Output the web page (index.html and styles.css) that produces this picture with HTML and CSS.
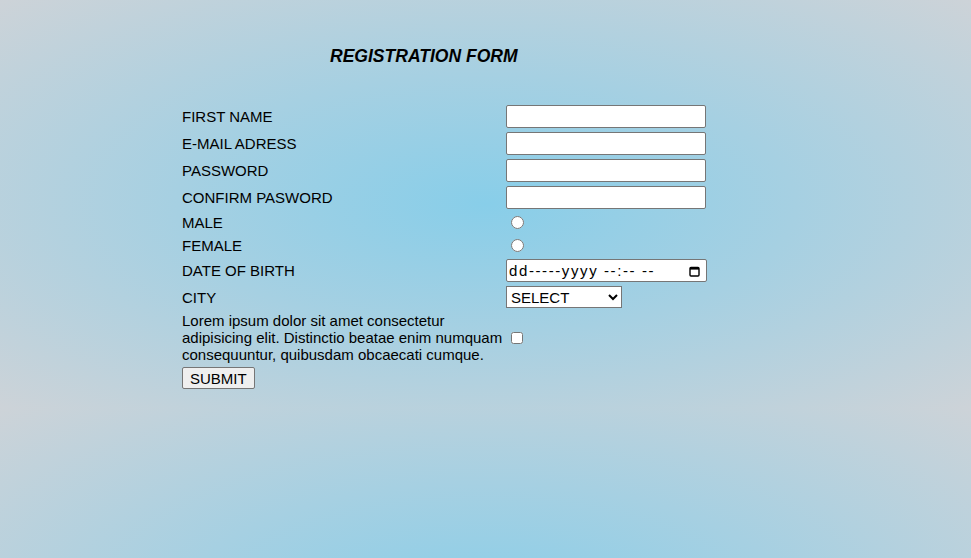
FILE: index.html
```html
<!DOCTYPE html>
<html lang="en">
<head>
<meta charset="utf-8">
<title>Registration Form</title>
<link rel="stylesheet" href="styles.css">
</head>
<body>
<div class="page">
  <h3 class="title">REGISTRATION FORM</h3>
  <form class="form">
    <table class="reg">
      <tr><td class="lbl">FIRST NAME</td><td class="ctl"><input class="field" type="text"></td></tr>
      <tr><td class="lbl">E-MAIL ADRESS</td><td class="ctl"><input class="field" type="text"></td></tr>
      <tr><td class="lbl">PASSWORD</td><td class="ctl"><input class="field" type="password"></td></tr>
      <tr><td class="lbl">CONFIRM PASWORD</td><td class="ctl"><input class="field" type="password"></td></tr>
      <tr><td class="lbl">MALE</td><td class="ctl"><input class="radio" type="radio" name="gender"></td></tr>
      <tr><td class="lbl">FEMALE</td><td class="ctl"><input class="radio" type="radio" name="gender"></td></tr>
      <tr><td class="lbl">DATE OF BIRTH</td><td class="ctl">
        <div class="date"><span class="date-text">dd-----yyyy --:-- --</span>
          <svg class="cal" width="11" height="12" viewBox="0 0 11 12"><rect x="1" y="2.5" width="9" height="8.5" rx="1" fill="none" stroke="#000" stroke-width="1.4"/><rect x="1" y="2" width="9" height="2.6" fill="#000"/></svg>
        </div>
      </td></tr>
      <tr><td class="lbl">CITY</td><td class="ctl"><select class="city"><option>SELECT</option><option>DELHI</option><option>MUMBAI</option></select></td></tr>
      <tr><td class="lbl">Lorem ipsum dolor sit amet consectetur adipisicing elit. Distinctio beatae enim numquam consequuntur, quibusdam obcaecati cumque.</td><td class="ctl"><input class="check" type="checkbox"></td></tr>
      <tr><td class="lbl"><button class="submit" type="button">SUBMIT</button></td><td></td></tr>
    </table>
  </form>
</div>
</body>
</html>
```
FILE: styles.css
```css
html {
  min-height: 100%;
  background: radial-gradient(ellipse farthest-corner at 50% 50%, #88cee9 0%, #a6d0e2 45%, #cdd3d8 100%);
  background-size: 100% 408px;
  background-repeat: repeat;
}
body {
  margin: 0;
  font-family: "Liberation Sans", Arial, sans-serif;
  font-size: 15px;
  color: #000;
}
.page {
  padding: 46px 0 0 179px;
}
.title {
  margin: 0 0 35px 151px;
  font-size: 17.55px;
  font-weight: bold;
  font-style: italic;
  line-height: 21px;
}
.form { margin: 0; }
.reg {
  border-collapse: separate;
  border-spacing: 2px;
}
.reg td {
  padding: 1px;
  vertical-align: middle;
}
.reg td.ctl {
  padding: 1px 1px 1px 0;
}
.lbl {
  width: 321px;
  line-height: 17px;
}
.field {
  box-sizing: border-box;
  display: block;
  width: 200px;
  height: 23px;
  margin: 0;
  border: 1px solid #767676;
  border-radius: 2px;
  background: #fff;
  padding: 1px 2px;
}
.radio {
  margin: 3px 3px 0 5px;
  width: 13px;
  height: 13px;
}
.date {
  box-sizing: border-box;
  display: flex;
  align-items: center;
  justify-content: space-between;
  width: 201px;
  height: 23px;
  border: 1px solid #767676;
  border-radius: 2px;
  background: #fff;
  padding: 0 6px 0 2px;
  font-size: 15px;
}
.date-text {
  white-space: pre;
  letter-spacing: 1.6px;
}
.cal { display: block; }
.city {
  box-sizing: border-box;
  width: 116px;
  height: 22px;
  margin: 0;
  font-family: inherit;
  font-size: 15px;
  border: 1px solid #767676;
  border-radius: 0;
  background: #fff;
  color: #000;
}
.check {
  margin: 3px 3px 3px 5px;
  width: 12px;
  height: 12px;
}
.submit {
  font-family: inherit;
  font-size: 15px;
  padding: 1px 7px;
  height: 22px;
  border: 1px solid #767676;
  border-radius: 2px;
  background: #efefef;
  color: #000;
  margin: 0;
}
```
